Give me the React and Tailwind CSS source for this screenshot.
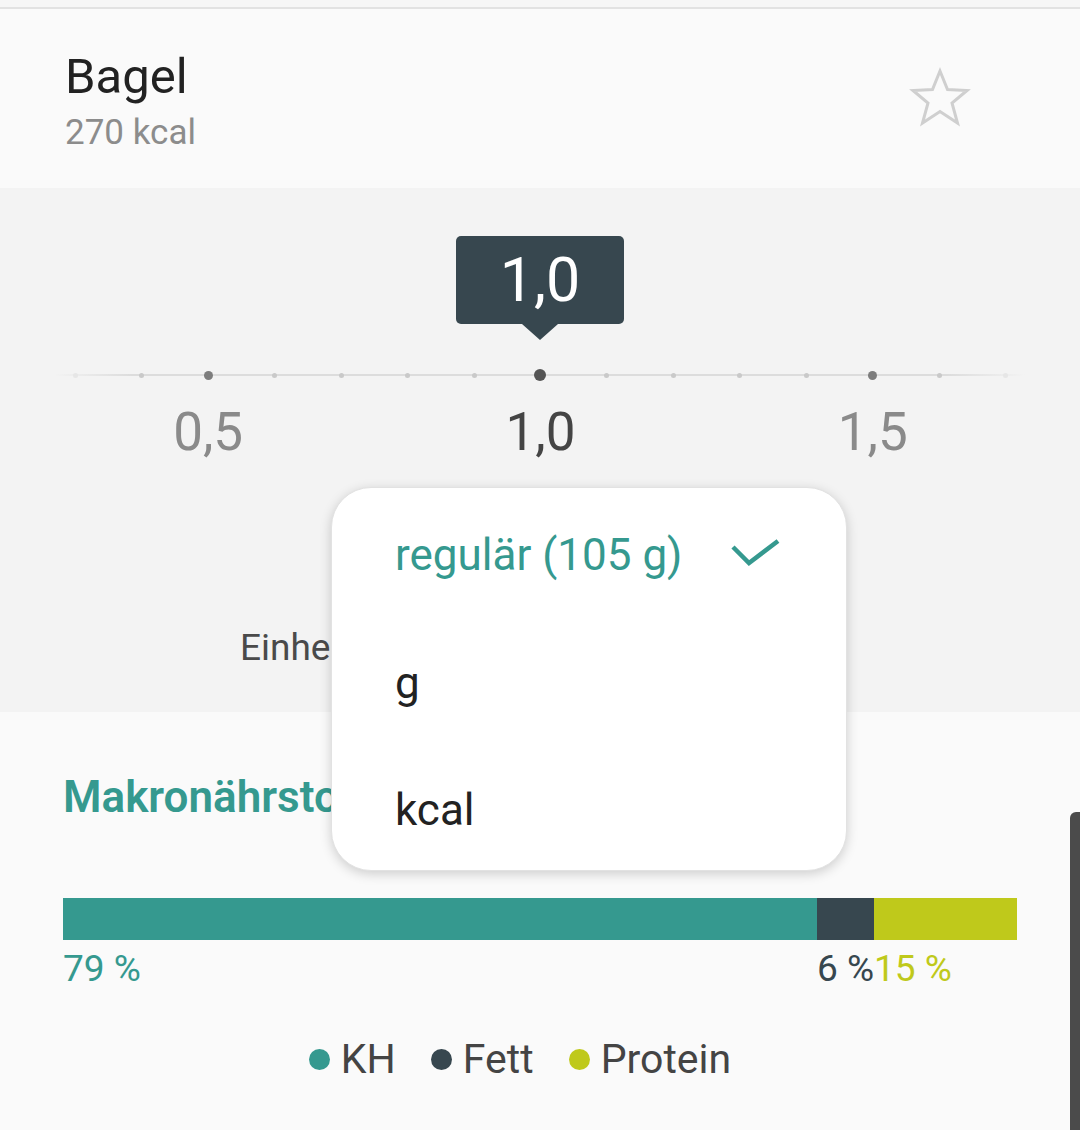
import React from "react";

const font = { fontFamily: "Roboto, 'Noto Sans', sans-serif" };

const ticks = Array.from({ length: 15 }, (_, i) => i);
const labels = { 2: "0,5", 7: "1,0", 12: "1,5" };

const Star = () => (
  <svg width="64" height="60" viewBox="0 0 64 60" fill="none">
    <path
      d="M32 4 L39.5 22.5 L59 23.5 L44 36 L49.5 56 L32 44.5 L14.5 56 L20 36 L5 23.5 L24.5 22.5 Z"
      stroke="#cfcfcf"
      strokeWidth="3"
      strokeLinejoin="miter"
    />
  </svg>
);

const Check = () => (
  <svg width="52" height="32" viewBox="0 0 52 32" fill="none">
    <path d="M3 8 L19 24 L48 2" stroke="#35998f" strokeWidth="4.5" />
  </svg>
);

const Tick = ({ i }) => {
  if (i === 7) return <div className="w-[12px] h-[12px] rounded-full bg-[#555]" />;
  if (i === 2 || i === 12) return <div className="w-[9px] h-[9px] rounded-full bg-[#7d7d7d]" />;
  const faded = i === 0 || i === 14;
  return (
    <div
      className={`w-[5px] h-[5px] rounded-full ${faded ? "bg-[#e6e6e6]" : "bg-[#c9c9c9]"}`}
    />
  );
};

const Dropdown = () => (
  <div className="absolute left-[331px] top-[487px] w-[516px] h-[384px] bg-white rounded-[40px] border border-[#e2e2e2] shadow-[0_3px_12px_rgba(0,0,0,0.18)] pt-[3px] overflow-hidden">
    <div className="h-[128px] flex items-center pl-[63px] pr-[64px] justify-between">
      <span className="text-[44px] leading-none text-[#35998f]">regulär (105 g)</span>
      <Check />
    </div>
    <div className="h-[127px] flex items-center pl-[63px]">
      <span className="text-[44px] leading-none text-[#222]">g</span>
    </div>
    <div className="h-[128px] flex items-center pl-[63px]">
      <span className="text-[44px] leading-none text-[#222]">kcal</span>
    </div>
  </div>
);

export default function App() {
  return (
    <div className="relative w-[1080px] h-[1130px] overflow-hidden bg-[#fafafa]" style={font}>
      <div className="h-[7px] bg-[#f6f6f6]" />
      <div className="h-[2px] bg-[#e2e2e2]" />

      {/* header */}
      <div className="h-[179px] flex items-start justify-between pl-[65px] pr-[108px]">
        <div className="pt-[43px]">
          <div className="text-[49px] leading-none text-[#222]">Bagel</div>
          <div className="mt-[14px] text-[35px] leading-none text-[#8c8c8c]">270 kcal</div>
        </div>
        <div className="pt-[58px]">
          <Star />
        </div>
      </div>

      {/* amount picker */}
      <div className="h-[524px] bg-[#f3f3f3] flex flex-col">
        <div className="flex flex-col items-center pt-[48px]">
          <div className="w-[168px] h-[88px] rounded-[5px] bg-[#37474f] flex items-center justify-center">
            <span className="text-[61px] leading-none text-white">1,0</span>
          </div>
          <div className="w-0 h-0 border-l-[18px] border-r-[18px] border-t-[16px] border-l-transparent border-r-transparent border-t-[#37474f]" />
        </div>

        <div className="relative ml-[42px] w-[997px] mt-[29px] h-[12px]">
          <div className="absolute left-[12px] right-[14px] top-[5px] h-[2px] bg-[linear-gradient(to_right,transparent,#dcdcdc_8%,#dcdcdc_92%,transparent)]" />
          <div className="relative grid grid-cols-15 h-full">
            {ticks.map((i) => (
              <div key={i} className="flex items-center justify-center">
                <Tick i={i} />
              </div>
            ))}
          </div>
        </div>

        <div className="ml-[42px] w-[997px] grid grid-cols-15 mt-[25px]">
          {ticks.map((i) => (
            <div key={i} className="flex justify-center">
              {labels[i] && (
                <span
                  className={`text-[53px] leading-none whitespace-nowrap ${
                    i === 7 ? "text-[#444]" : "text-[#8a8a8a]"
                  }`}
                >
                  {labels[i]}
                </span>
              )}
            </div>
          ))}
        </div>

        <div className="pl-[240px] mt-[170px] flex items-center gap-6">
          <span className="text-[37px] leading-none text-[#4a4a4a]">Einheit</span>
        </div>
      </div>

      {/* macros */}
      <div className="px-[63px] pt-[63px]">
        <div className="text-[44px] leading-none font-semibold text-[#35998f]">Makronährstoffe</div>

        <div className="mt-[79px] h-[42px] flex">
          <div className="w-[754px] bg-[#35998f]" />
          <div className="w-[57px] bg-[#37474f]" />
          <div className="w-[143px] bg-[#bfc91b]" />
        </div>

        <div className="mt-[10px] flex text-[37px] leading-none">
          <span className="w-[754px] text-[#35998f]">79 %</span>
          <span className="w-[57px] text-[#37474f] whitespace-nowrap">6 %</span>
          <span className="text-[#bfc91b]">15 %</span>
        </div>

        <div className="mt-[52px] flex justify-center items-center gap-[11px] text-[41px] leading-none text-[#444] pr-[40px]">
          <span className="w-[21px] h-[21px] rounded-full bg-[#35998f]" />
          <span>KH</span>
          <span className="ml-[24px] w-[21px] h-[21px] rounded-full bg-[#37474f]" />
          <span>Fett</span>
          <span className="ml-[24px] w-[21px] h-[21px] rounded-full bg-[#bfc91b]" />
          <span>Protein</span>
        </div>
      </div>

      <Dropdown />

      <div className="absolute right-0 top-[812px] bottom-0 w-[10px] bg-[#4b4b4b] rounded-tl-[6px]" />
    </div>
  );
}
